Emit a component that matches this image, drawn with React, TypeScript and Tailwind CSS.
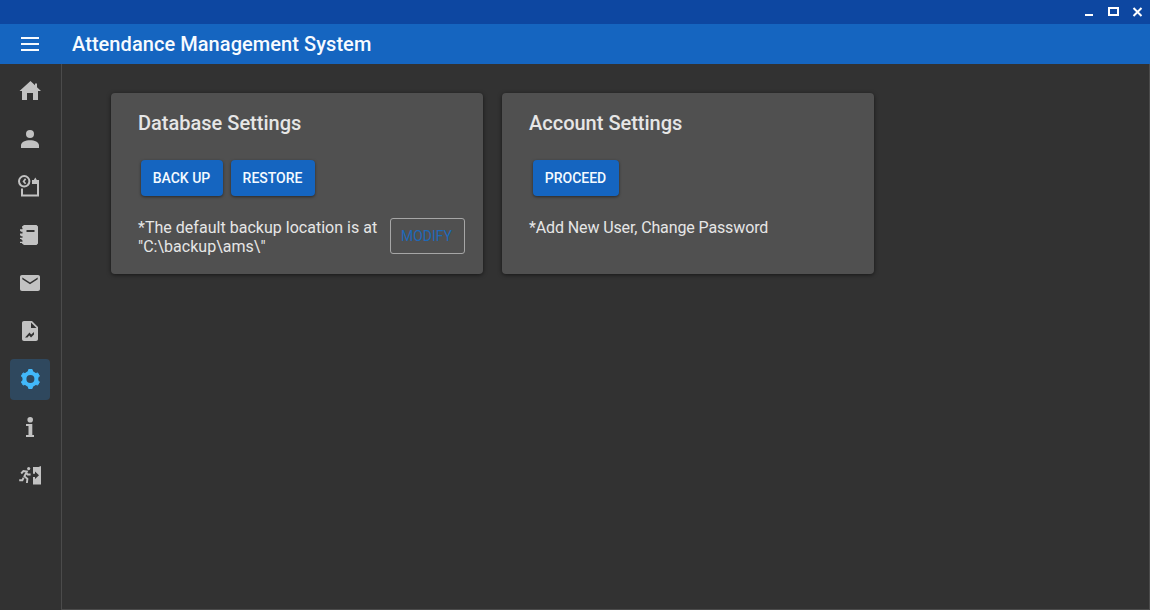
import type { ReactNode } from 'react';

type NavItem = { name: string; active?: boolean; icon: ReactNode };

const navItems: NavItem[] = [
  {
    name: 'Home',
    icon: <path d="M12.500 2l4.500 4.200V4.600h2v3.600L23 12h-3v9h-5v-7H9v7H4v-9H1.500z" />,
  },
  {
    name: 'Students',
    icon: (
      <>
        <circle cx="12" cy="7" r="4" />
        <path d="M12 13.200c4.500 0 9 1.900 9 5V21H3v-2.800c0-3.100 4.500-5 9-5z" />
      </>
    ),
  },
  {
    name: 'Attendance',
    icon: (
      <g fill="none" stroke="currentColor" strokeWidth="2">
        <circle cx="6.200" cy="6.300" r="5.200" />
        <path d="M7.600 3.800L5.600 6.500l2 2.200" strokeWidth="1.700" />
        <path d="M4 13.500V20.500H20V6" />
        <path d="M14 9V5h1.800L17.300 2.500 18.800 5H21V9z" fill="currentColor" stroke="none" />
      </g>
    ),
  },
  {
    name: 'Records',
    icon: (
      <path
        fillRule="evenodd"
        d="M6 2h12.500L20 3.500v17L18.500 22H6L4 20.500V20H2v-1.300h2.500v-1.200L3 16H2v-1.300h2.500v-1.500H3L2 12v-1.500h2.500v-1.800H3L2 7.500V6.300h2.500v-1.600H4V3.500zM8.500 7v2h8V7z"
      />
    ),
  },
  {
    name: 'Mail',
    icon: (
      <path
        fillRule="evenodd"
        d="M4 4h16c1.200 0 2 .8 2 2v12c0 1.200-.8 2-2 2H4c-1.200 0-2-.8-2-2V6c0-1.200.8-2 2-2zM4.300 6.500v1.800L12 13.300l7.700-5V6.500L12 11.500z"
      />
    ),
  },
  {
    name: 'Reports',
    icon: (
      <path
        fillRule="evenodd"
        d="M6 2h8l6 6v12c0 1.200-.8 2-2 2H6c-1.200 0-2-.8-2-2V4c0-1.200.8-2 2-2zM13 3.500V9h5.500zM7 18.500h2.500l1.700-2 1.800 2L16 15.600v-2.500l-2.800 2.300L11.500 13.500z"
      />
    ),
  },
  {
    name: 'Settings',
    active: true,
    icon: (
      <>
        <circle cx="12.400" cy="12" r="6" fill="none" stroke="currentColor" strokeWidth="4" />
        <path
          strokeLinejoin="round"
          strokeWidth="1"
          stroke="currentColor"
          d="M10.700 2.500h3.400l.8 3.500h-5zM10.700 21.500h3.400l.8-3.500h-5zM19.600 5.900l1.800 3.100-2.500 2.600-2.600-4.400zM19.600 18.100l1.800-3.100-2.500-2.600-2.600 4.400zM5.200 5.900L3.400 9l2.500 2.600 2.600-4.400zM5.200 18.100L3.400 15l2.500-2.600 2.600 4.400z"
        />
      </>
    ),
  },
  {
    name: 'About',
    icon: (
      <>
        <circle cx="12.200" cy="4.700" r="2.800" />
        <path d="M8 9h6.300v11H16v2H8v-2h2.500v-9H8z" />
      </>
    ),
  },
  {
    name: 'Exit',
    icon: (
      <>
        <circle cx="10.700" cy="5.600" r="1.600" />
        <path
          d="M3.200 10.500l2.200-2.500 3.500.5-2.500 4.800 3 2.600-.5 4.100M7.800 9l1.800 2.500h3M5.600 14.600l-1.200 2.600H1.200"
          fill="none"
          stroke="currentColor"
          strokeWidth="1.900"
        />
        <path
          fillRule="evenodd"
          d="M23 3v18.500h-8V14h2v2l4-3.800L17 8.500v2.200h-2V4h5.500z"
        />
      </>
    ),
  },
];

function NavButton({ item }: { item: NavItem }) {
  return (
    <button
      aria-label={item.name}
      className={
        item.active
          ? 'flex h-[41px] w-10 items-start justify-center rounded bg-[#2f485e] pt-2 text-[#42b9fb]'
          : 'flex h-[41px] w-10 items-start justify-center rounded pt-2 text-[#c2c2c2]'
      }
    >
      <svg viewBox="0 0 24 24" className="size-6" fill="currentColor">
        {item.icon}
      </svg>
    </button>
  );
}

function RaisedButton({ label, width }: { label: string; width: string }) {
  return (
    <button
      className={`${width} h-9 rounded bg-[#1565c0] pr-px text-center text-sm font-medium tracking-[-0.02px] whitespace-nowrap text-[#f4faff] shadow-[0_1px_3px_rgba(0,0,0,0.5)]`}
    >
      {label}
    </button>
  );
}

function Card({ title, children }: { title: string; children: ReactNode }) {
  return (
    <section className="h-[181px] w-[372px] rounded bg-[#505050] pt-[16px] pl-[27px] text-[#e6e6e6] shadow-[0_1px_4px_rgba(0,0,0,0.55)]">
      <h2 className="text-xl leading-7 font-medium">{title}</h2>
      {children}
    </section>
  );
}

export default function App() {
  return (
    <div className="flex h-[610px] w-[1150px] flex-col overflow-hidden bg-[#323232] font-['Roboto',sans-serif]">
      <div className="flex h-6 shrink-0 justify-end bg-[#0d47a1]">
        <svg className="h-6 w-[66px]" viewBox="1084 0 66 24" fill="none" stroke="#fff" strokeWidth="2" shapeRendering="crispEdges">
          <path d="M1085 15h8" />
          <path d="M1109 8h9v7h-9z" />
          <path d="M1133.500 8l8 8M1141.500 8l-8 8" shapeRendering="auto" />
        </svg>
      </div>
      <header className="flex h-10 shrink-0 items-center bg-[#1565c0] text-[#f7fbff]">
        <button aria-label="Menu" className="ml-[21px] flex w-[18px] flex-col gap-1">
          <span className="h-0.5 bg-current" />
          <span className="h-0.5 bg-current" />
          <span className="h-0.5 bg-current" />
        </button>
        <h1 className="ml-[33px] text-xl font-medium tracking-[0.06px]">Attendance Management System</h1>
      </header>
      <div className="flex min-h-0 grow">
        <nav className="flex w-[61px] shrink-0 flex-col gap-[7px] pt-[7px] pl-[10px]">
          {navItems.map((item) => (
            <NavButton key={item.name} item={item} />
          ))}
        </nav>
        <main className="flex grow items-start gap-[19px] border-r border-b border-l border-[#4b4b4b] pt-[29px] pl-[49px]">
          <Card title="Database Settings">
            <div className="mt-[23px] ml-[3px] flex gap-2">
              <RaisedButton label="BACK UP" width="w-[82px]" />
              <RaisedButton label="RESTORE" width="w-[84px]" />
            </div>
            <div className="mt-[22px] flex items-start">
              <p className="w-[252px] text-base leading-[19px] tracking-[0.02px] whitespace-nowrap">
                *The default backup location is at
                <br />
                "C:\backup\ams\"
              </p>
              <button className="h-9 w-[75px] rounded-[3px] border border-[#a6a6a6] pr-0.5 text-center text-sm text-[#1e68b8]">
                MODIFY
              </button>
            </div>
          </Card>
          <Card title="Account Settings">
            <div className="mt-[23px] ml-[4px] flex">
              <RaisedButton label="PROCEED" width="w-[86px]" />
            </div>
            <p className="mt-[22px] text-base leading-[19px] tracking-[-0.12px]">*Add New User, Change Password</p>
          </Card>
        </main>
      </div>
    </div>
  );
}
